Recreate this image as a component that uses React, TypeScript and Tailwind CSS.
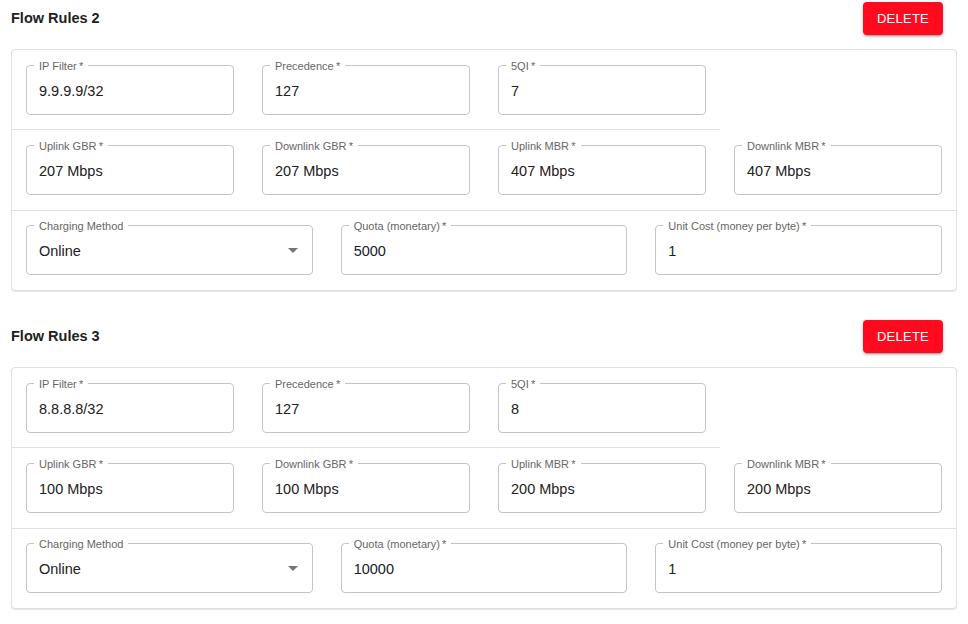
import React from "react";

type Rule = {
  title: string;
  ipFilter: string;
  precedence: string;
  fiveQi: string;
  ulGbr: string;
  dlGbr: string;
  ulMbr: string;
  dlMbr: string;
  quota: string;
  unitCost: string;
};

const rules: Rule[] = [
  {
    title: "Flow Rules 2",
    ipFilter: "9.9.9.9/32",
    precedence: "127",
    fiveQi: "7",
    ulGbr: "207 Mbps",
    dlGbr: "207 Mbps",
    ulMbr: "407 Mbps",
    dlMbr: "407 Mbps",
    quota: "5000",
    unitCost: "1",
  },
  {
    title: "Flow Rules 3",
    ipFilter: "8.8.8.8/32",
    precedence: "127",
    fiveQi: "8",
    ulGbr: "100 Mbps",
    dlGbr: "100 Mbps",
    ulMbr: "200 Mbps",
    dlMbr: "200 Mbps",
    quota: "10000",
    unitCost: "1",
  },
];

function Field({
  label,
  value,
  required = true,
  select = false,
}: {
  label: string;
  value: string;
  required?: boolean;
  select?: boolean;
}) {
  return (
    <div className="relative h-[50px] rounded-[4px] border border-[#c4c4c4] flex items-center justify-between pl-[12px] pr-[7px] pt-[4px]">
      <span className="absolute left-[7px] top-0 -translate-y-1/2 bg-white px-[5px] text-[11px] leading-[12px] text-[#666666] whitespace-nowrap">
        {label}
        {required ? "\u2009*" : ""}
      </span>
      <span className="text-[14.5px] text-[#212121]">{value}</span>
      {select && (
        <svg width="24" height="24" viewBox="0 0 24 24" className="text-[#757575] -mt-[4px]">
          <path d="M7 10l5 5 5-5z" fill="currentColor" />
        </svg>
      )}
    </div>
  );
}

function RuleCard({ rule }: { rule: Rule }) {
  return (
    <section>
      <div className="flex items-center justify-between pr-[14px] h-[33px]">
        <h2 className="text-[14.5px] font-bold text-[#212121]">{rule.title}</h2>
        <button className="h-[33px] w-[80px] rounded-[4px] bg-[#ff0a1e] text-white text-[13px] tracking-[0.02em] shadow-[0_3px_1px_-2px_rgba(0,0,0,0.2),0_2px_2px_0_rgba(0,0,0,0.14),0_1px_5px_0_rgba(0,0,0,0.12)]">
          DELETE
        </button>
      </div>

      <div className="mt-[14px] rounded-[4px] border border-[#e0e0e0] shadow-[0_1px_1px_rgba(0,0,0,0.1)] bg-white">
        {/* first row: only three cells carry the divider */}
        <div className="grid grid-cols-4">
          <div className="col-span-3 grid grid-cols-3 border-b border-[#e0e0e0]">
            <div className="px-[14px] pt-[15px] pb-[14px]">
              <Field label="IP Filter" value={rule.ipFilter} />
            </div>
            <div className="px-[14px] pt-[15px] pb-[14px]">
              <Field label="Precedence" value={rule.precedence} />
            </div>
            <div className="px-[14px] pt-[15px] pb-[14px]">
              <Field label="5QI" value={rule.fiveQi} />
            </div>
          </div>
          <div />
        </div>

        <div className="grid grid-cols-4 border-b border-[#e0e0e0]">
          <div className="px-[14px] pt-[15px] pb-[15px]">
            <Field label="Uplink GBR" value={rule.ulGbr} />
          </div>
          <div className="px-[14px] pt-[15px] pb-[15px]">
            <Field label="Downlink GBR" value={rule.dlGbr} />
          </div>
          <div className="px-[14px] pt-[15px] pb-[15px]">
            <Field label="Uplink MBR" value={rule.ulMbr} />
          </div>
          <div className="px-[14px] pt-[15px] pb-[15px]">
            <Field label="Downlink MBR" value={rule.dlMbr} />
          </div>
        </div>

        <div className="grid grid-cols-3">
          <div className="px-[14px] pt-[14px] pb-[15px]">
            <Field label="Charging Method" value="Online" required={false} select />
          </div>
          <div className="px-[14px] pt-[14px] pb-[15px]">
            <Field label="Quota (monetary)" value={rule.quota} />
          </div>
          <div className="px-[14px] pt-[14px] pb-[15px]">
            <Field label="Unit Cost (money per byte)" value={rule.unitCost} />
          </div>
        </div>
      </div>
    </section>
  );
}

export default function App() {
  return (
    <div className="min-h-screen bg-white px-[11px] pt-[2px] font-['Liberation_Sans',Arial,sans-serif]">
      <div className="flex flex-col gap-[29px]">
        {rules.map((r) => (
          <RuleCard key={r.title} rule={r} />
        ))}
      </div>
    </div>
  );
}
